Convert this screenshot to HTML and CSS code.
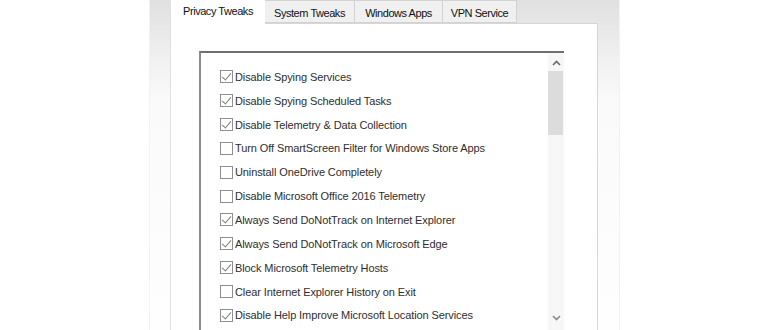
FILE: index.html
```html
<!DOCTYPE html>
<html>
<head>
<meta charset="utf-8">
<link rel="stylesheet" href="styles.css">
</head>
<body>
<div class="page">
  <div class="window">
    <div class="tabs">
      <div class="tab active">Privacy Tweaks</div>
      <div class="tab">System Tweaks</div>
      <div class="tab">Windows Apps</div>
      <div class="tab">VPN Service</div>
    </div>
    <div class="panel">
      <div class="listbox">
        <ul class="items">
          <li class="item"><span class="cb on"></span>Disable Spying Services</li>
          <li class="item"><span class="cb on"></span>Disable Spying Scheduled Tasks</li>
          <li class="item"><span class="cb on"></span>Disable Telemetry &amp; Data Collection</li>
          <li class="item"><span class="cb"></span>Turn Off SmartScreen Filter for Windows Store Apps</li>
          <li class="item"><span class="cb"></span>Uninstall OneDrive Completely</li>
          <li class="item"><span class="cb"></span>Disable Microsoft Office 2016 Telemetry</li>
          <li class="item"><span class="cb on"></span>Always Send DoNotTrack on Internet Explorer</li>
          <li class="item"><span class="cb on"></span>Always Send DoNotTrack on Microsoft Edge</li>
          <li class="item"><span class="cb on"></span>Block Microsoft Telemetry Hosts</li>
          <li class="item"><span class="cb"></span>Clear Internet Explorer History on Exit</li>
          <li class="item"><span class="cb on"></span>Disable Help Improve Microsoft Location Services</li>
        </ul>
        <div class="scrollbar">
          <div class="arrow up"><svg width="9" height="6" viewBox="0 0 9 6"><path d="M1 5 L4.5 1.5 L8 5" fill="none" stroke="#6a6a6a" stroke-width="1.6"/></svg></div>
          <div class="thumb"></div>
          <div class="track"></div>
          <div class="arrow down"><svg width="9" height="6" viewBox="0 0 9 6"><path d="M1 1 L4.5 4.5 L8 1" fill="none" stroke="#8a8a8a" stroke-width="1.6"/></svg></div>
        </div>
      </div>
    </div>
  </div>
</div>
</body>
</html>
```

FILE: styles.css
```css
html, body {
  margin: 0;
  padding: 0;
  background: #ffffff;
}
.page {
  width: 770px;
  height: 330px;
  overflow: hidden;
  padding-left: 149px;
  box-sizing: border-box;
}
.window {
  width: 471px;
  height: 330px;
  box-sizing: border-box;
  padding: 0 21px 0 20px;
  border-left: 1px solid #f2f2f2;
  border-right: 1px solid #f2f2f2;
  background: linear-gradient(to bottom, #e0e0e0 0px, #eeeeee 50px, #fafafa 100px, #fefefe 330px);
  display: flex;
  flex-direction: column;
  font-family: "Liberation Sans", Arial, sans-serif;
}
.tabs {
  display: flex;
  height: 23px;
  align-items: flex-start;
}
.tab {
  height: 23px;
  box-sizing: border-box;
  border: 1px solid #d2d2d2;
  border-left: none;
  background: #f0f0f0;
  color: #111111;
  font-size: 11px;
  letter-spacing: -0.45px;
  display: flex;
  align-items: center;
  justify-content: center;
  padding-top: 2px;
}
.tab.active {
  width: 95px;
  height: 24px;
  background: #ffffff;
  border: none;
  border-left: 1px solid #e0e0e0;
  padding-top: 0;
  padding-bottom: 3px;
  position: relative;
  z-index: 1;
}
.tab:nth-child(2) { width: 90px; }
.tab:nth-child(3) { width: 88px; }
.tab:nth-child(4) { width: 74px; }
.panel {
  flex: 1;
  background: #ffffff;
  border-top: 1px solid #d6d6d6;
  border-left: 1px solid #e0e0e0;
  border-right: 1px solid #d6d6d6;
  padding: 27px 33px 0 28px;
}
.listbox {
  display: flex;
  height: 290px;
  border-top: 2px solid #6f6f6f;
  border-left: 2px solid #8c8c8c;
  background: #ffffff;
}
.items {
  list-style: none;
  margin: 0;
  padding: 12px 0 0 19px;
  flex: 1;
}
.item {
  height: 23.85px;
  display: flex;
  align-items: center;
  font-size: 11px;
  letter-spacing: -0.1px;
  color: #2e2e2e;
  white-space: nowrap;
}
.cb {
  width: 13px;
  height: 13px;
  box-sizing: border-box;
  border: 1px solid #8e8e8e;
  background: #ffffff;
  margin-right: 2px;
  flex: none;
  position: relative;
}
.cb.on::after {
  content: "";
  position: absolute;
  left: 3px;
  top: 0px;
  width: 4px;
  height: 8px;
  border-right: 1.3px solid #7c7c7c;
  border-bottom: 1.3px solid #7c7c7c;
  transform: rotate(40deg);
}
.scrollbar {
  width: 16px;
  background: #f7f7f7;
  display: flex;
  flex-direction: column;
}
.arrow {
  height: 18px;
  display: flex;
  align-items: center;
  justify-content: center;
}
.arrow.up { height: 16px; padding-top: 2px; }
.thumb {
  height: 64px;
  background: #dcdcdc;
  margin: 0 1px 0 0;
}
.track { flex: 1; max-height: 174px; }
```
